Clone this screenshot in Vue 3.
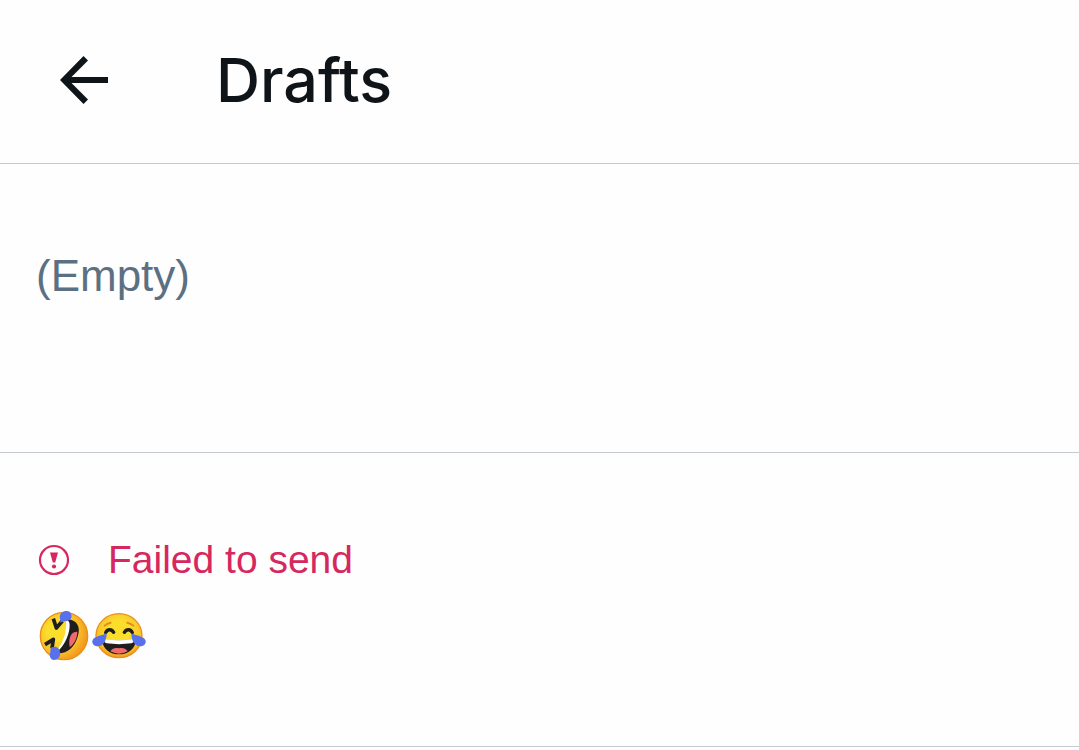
<script setup>
const title = 'Drafts'
</script>

<template>
  <div class="page">
    <header class="bar">
      <button class="back" type="button" aria-label="Back">
        <svg width="48" height="48" viewBox="0 0 48 48" aria-hidden="true">
          <path d="M48 21H11.5L28 4.500 23.500 0 0 24 23.500 48 28 43.500 11.500 27H48Z" fill="#0f1419" />
        </svg>
      </button>
      <h1>{{ title }}</h1>
    </header>
    <main>
      <section class="draft">
        <p class="empty">(Empty)</p>
      </section>
      <section class="draft failed">
        <p class="status">
          <svg width="32" height="32" viewBox="0 0 32 32" aria-hidden="true">
            <circle cx="16" cy="16" r="14" fill="none" stroke="#d6275f" stroke-width="2.200" />
            <path d="M12 8.500H20L17.200 18.500H14.800Z" fill="#d6275f" />
            <circle cx="16" cy="22.500" r="2.100" fill="#d6275f" />
          </svg>
          <span>Failed to send</span>
        </p>
        <div class="emoji">
          <svg width="54" height="54" viewBox="21 27 162 162" role="img" aria-label="Rolling on the floor laughing">
            <defs>
              <radialGradient id="rofl" cx="0.35" cy="0.4" r="0.68">
                <stop offset="0.3" stop-color="#fbdd2c" />
                <stop offset="0.7" stop-color="#f9bb28" />
                <stop offset="1" stop-color="#f0931e" />
              </radialGradient>
            </defs>
            <circle cx="102" cy="108" r="71" fill="url(#rofl)" stroke="#ea9018" stroke-width="4" />
            <path d="M113 58C142 60 153 82 143 110C133 144 108 163 79 159C101 130 115 97 113 58Z" fill="#201d1e" />
            <path d="M108 61C116 62 119 66 119 75C119 102 106 130 88 149L79 154C99 130 111 97 108 61Z" fill="#fff" />
            <path d="M142 95C124 94 114 112 119 141C132 133 142 115 142 95Z" fill="#ef6a6c" />
            <path d="M70 56L79 84L97 63" fill="none" stroke="#201d1e" stroke-width="11" stroke-linejoin="round" />
            <path d="M45 134L70 118L66 145" fill="none" stroke="#201d1e" stroke-width="11" stroke-linejoin="round" />
            <path d="M91 59C86 47 93 34 108 33C121 32 127 43 124 53C120 66 105 60 91 68Z" fill="#5670ee" />
            <path d="M62 143C76 136 89 142 90 157C92 171 83 180 72 180C61 180 57 168 61 157Z" fill="#5670ee" />
          </svg>
          <svg width="54" height="54" viewBox="18 27 162 162" role="img" aria-label="Face with tears of joy">
            <defs>
              <radialGradient id="joy" cx="0.5" cy="0.4" r="0.62">
                <stop offset="0.4" stop-color="#fbdd2c" />
                <stop offset="0.78" stop-color="#f9c22a" />
                <stop offset="1" stop-color="#f0931e" />
              </radialGradient>
            </defs>
            <ellipse cx="99" cy="107" rx="69" ry="66" fill="url(#joy)" stroke="#ea9018" stroke-width="4" />
            <path d="M56 77Q63 70 74 68M124 68Q135 70 142 77" fill="none" stroke="#e78a1e" stroke-width="6" stroke-linecap="round" />
            <path d="M59 98C64 86 77 87 83 97M115 97C121 87 134 86 139 98" fill="none" stroke="#201d1e" stroke-width="10" stroke-linecap="round" />
            <path d="M48 119Q99 124 150 119C148 147 126 163 99 163C72 163 50 147 48 119Z" fill="#201d1e" />
            <path d="M53 118Q99 124 145 118Q144 128 136 130Q99 135 62 130Q54 128 53 118Z" fill="#fff" />
            <path d="M73 154C80 142 92 143 99 145C106 143 118 142 125 154Q99 168 73 154Z" fill="#ef6a6c" />
            <path d="M62 100C62 121 52 139 36 139C23 139 16 130 20 120C25 109 44 108 62 100Z" fill="#5670ee" />
            <path d="M136 100C136 121 146 139 162 139C175 139 182 130 178 120C173 109 154 108 136 100Z" fill="#5670ee" />
          </svg>
        </div>
      </section>
    </main>
  </div>
</template>

<style>
body {
  margin: 0;
  background: #fefefe;
}
</style>

<style scoped>
.page {
  font-family: "Liberation Sans", Arial, sans-serif;
  color: #0f1419;
}
.bar {
  display: flex;
  align-items: center;
  gap: 108px;
  padding: 40px 60px 43px;
  border-bottom: 1px solid #c5cbd0;
}
.back {
  display: flex;
  padding: 0;
  border: 0;
  background: none;
  cursor: pointer;
}
h1 {
  margin: 0;
  font-family: Inter, sans-serif;
  font-size: 61px;
  line-height: 80px;
  font-weight: 500;
}
p {
  margin: 0;
}
.draft {
  padding: 84px 36px;
  border-bottom: 1px solid #c5cbd0;
}
.failed {
  padding-top: 83px;
  padding-bottom: 83px;
}
.empty {
  padding-bottom: 64px;
  font-size: 44px;
  line-height: 56px;
  color: #5b7083;
}
.status {
  display: flex;
  align-items: center;
  gap: 38px;
  padding-left: 2px;
  font-size: 39px;
  line-height: 48px;
  color: #d6275f;
}
.emoji {
  display: flex;
  gap: 1px;
  padding: 25px 1px 0;
}
</style>
